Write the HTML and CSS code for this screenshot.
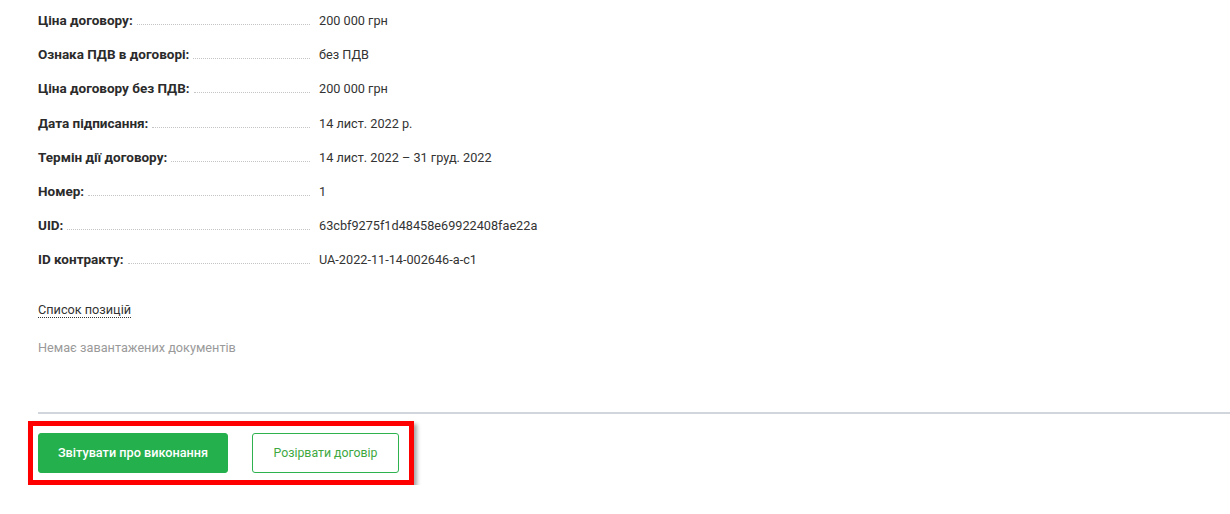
FILE: index.html
```html
<!DOCTYPE html>
<html lang="uk">
<head>
<meta charset="utf-8">
<link rel="stylesheet" href="styles.css">
</head>
<body>
<div class="page">
  <div class="props">
    <div class="row"><div class="label"><span class="ltext">Ціна договору:</span><span class="dots"></span></div><div class="value">200 000 грн</div></div>
    <div class="row"><div class="label"><span class="ltext">Ознака ПДВ в договорі:</span><span class="dots"></span></div><div class="value">без ПДВ</div></div>
    <div class="row"><div class="label"><span class="ltext">Ціна договору без ПДВ:</span><span class="dots"></span></div><div class="value">200 000 грн</div></div>
    <div class="row"><div class="label"><span class="ltext">Дата підписання:</span><span class="dots"></span></div><div class="value">14 лист. 2022 р.</div></div>
    <div class="row"><div class="label"><span class="ltext">Термін дії договору:</span><span class="dots"></span></div><div class="value">14 лист. 2022 – 31 груд. 2022</div></div>
    <div class="row"><div class="label"><span class="ltext">Номер:</span><span class="dots"></span></div><div class="value">1</div></div>
    <div class="row"><div class="label"><span class="ltext">UID:</span><span class="dots"></span></div><div class="value">63cbf9275f1d48458e69922408fae22a</div></div>
    <div class="row"><div class="label"><span class="ltext">ID контракту:</span><span class="dots"></span></div><div class="value">UA-2022-11-14-002646-a-c1</div></div>
  </div>
  <div class="positions"><span class="link">Список позицій</span></div>
  <div class="nodocs">Немає завантажених документів</div>
  <div class="separator"></div>
  <div class="actions">
    <div class="highlight">
      <button class="btn btn-primary">Звітувати про виконання</button>
      <button class="btn btn-outline">Розірвати договір</button>
    </div>
  </div>
</div>
</body>
</html>
```

FILE: styles.css
```css
* { box-sizing: border-box; }
html, body { margin: 0; padding: 0; background: #fff; }
body {
  font-family: Roboto, "Liberation Sans", Arial, sans-serif;
  font-size: 12.7px;
  color: #333;
}
.page {
  padding-left: 38px;
  padding-top: 3px;
}
.props {
  display: flex;
  flex-direction: column;
}
.row {
  display: flex;
  align-items: baseline;
  height: 34.2px;
  line-height: 34.2px;
}
.label {
  width: 272px;
  display: flex;
  align-items: baseline;
  flex: none;
}
.ltext {
  font-weight: 700;
  font-size: 13.5px;
  color: #2b2b2b;
  white-space: nowrap;
}
.dots {
  flex: 1;
  margin-left: 4px;
  border-bottom: 1px dotted #c4c4c4;
  height: 1px;
}
.value {
  margin-left: 9px;
  color: #333;
}
.positions {
  margin-top: 24px;
  line-height: 18px;
}
.link {
  color: #333;
  border-bottom: 1px dotted #333;
}
.nodocs {
  margin-top: 20px;
  line-height: 18px;
  color: #9a9a9a;
}
.separator {
  margin-top: 55px;
  height: 2px;
  background: #d1d5dc;
}
.actions {
  margin-left: -10px;
  margin-top: 7px;
}
.highlight {
  display: inline-flex;
  gap: 24px;
  border: 5px solid #ff0000;
  padding: 7px 10px 7px 5px;
  box-shadow: 3px 3px 4px rgba(0,0,0,0.35);
}
.btn {
  font-family: inherit;
  font-size: 12.7px;
  height: 40px;
  border-radius: 3px;
  cursor: pointer;
}
.btn-primary {
  width: 190px;
  background: #24b04c;
  border: 1px solid #24b04c;
  color: #fff;
  font-weight: 500;
}
.btn-outline {
  width: 147px;
  font-size: 12.3px;
  background: #fff;
  border: 1px solid #2db24f;
  color: #3ea83f;
}
```
